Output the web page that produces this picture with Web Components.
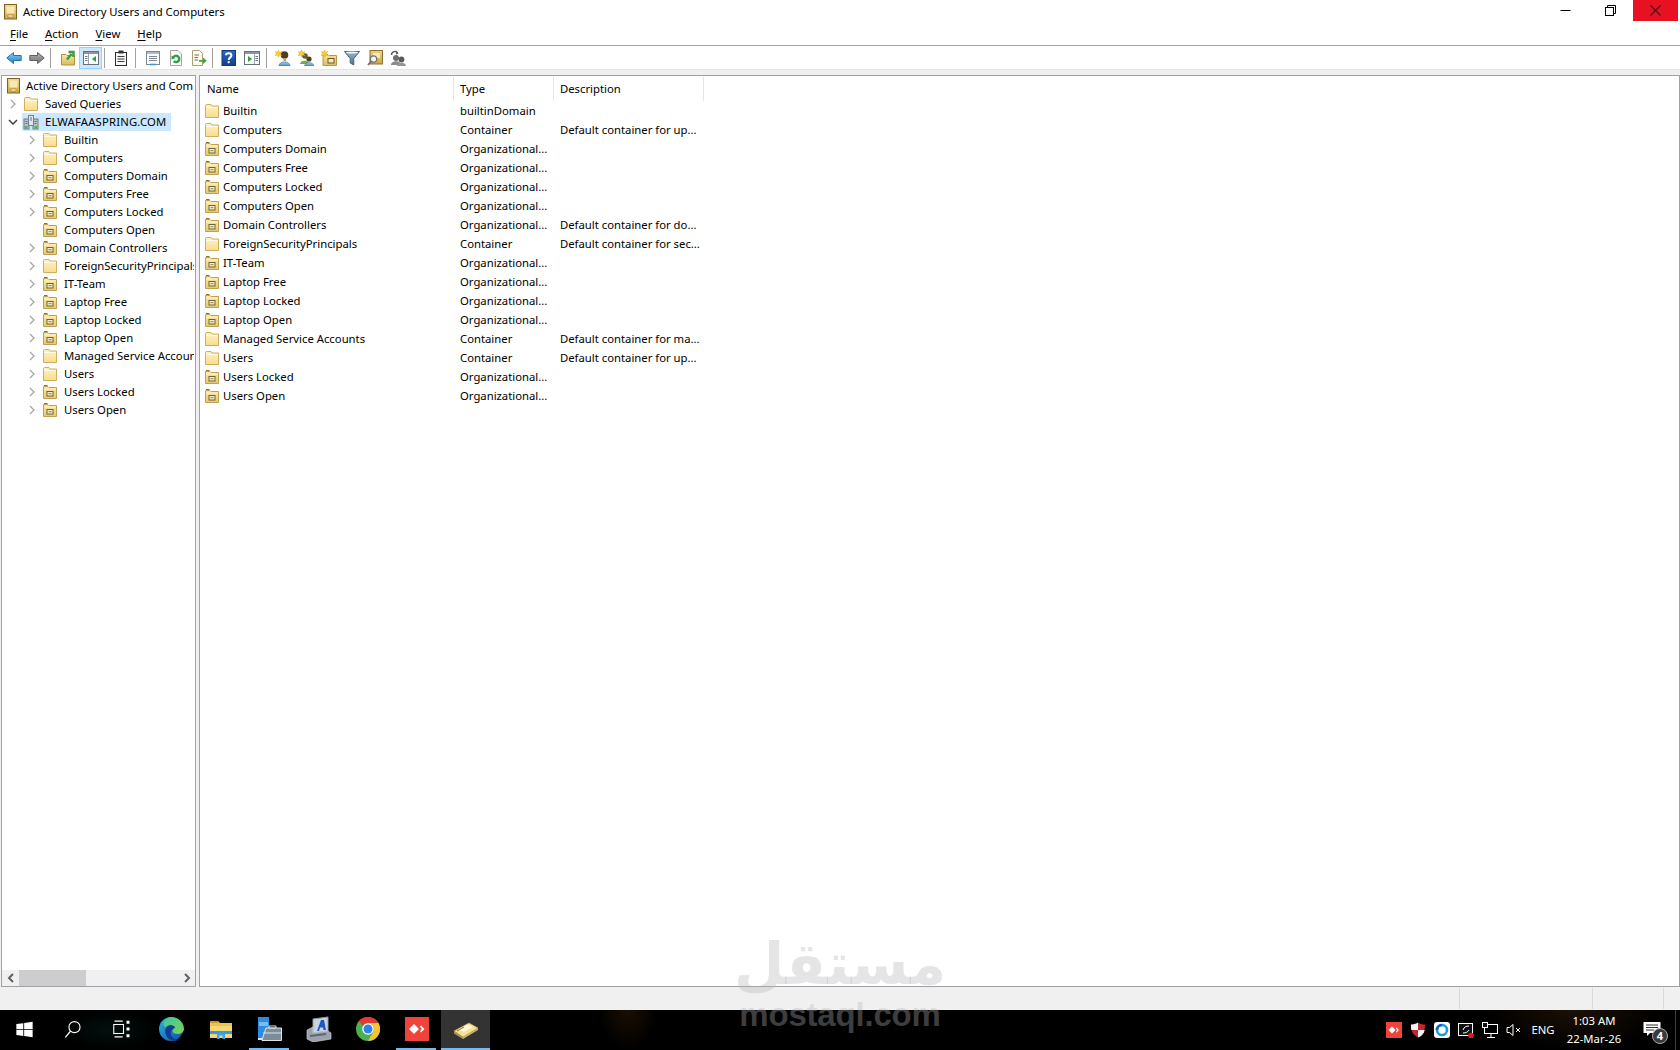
<!doctype html>
<html lang="en"><head><meta charset="utf-8"><title>Active Directory Users and Computers</title>
<style>
html,body{margin:0;height:1050px;width:1680px;overflow:hidden;background:#fff;font:11.3px/16px "Noto Sans",sans-serif;color:#000}
</style></head>
<body>
<ad-desktop>
<win-titlebar>Active Directory Users and Computers</win-titlebar>
<win-menubar><menu-item key="F" rest="ile"></menu-item><menu-item key="A" rest="ction"></menu-item><menu-item key="V" rest="iew"></menu-item><menu-item key="H" rest="elp"></menu-item></win-menubar>
<win-toolbar>
<tool-btn icon="back"></tool-btn><tool-btn icon="fwd"></tool-btn><tool-sep l="2" r="5"></tool-sep>
<tool-btn icon="up"></tool-btn><tool-btn icon="tree" active></tool-btn><tool-sep l="2" r="4"></tool-sep>
<tool-btn icon="clip"></tool-btn><tool-sep l="3" r="5"></tool-sep>
<tool-btn icon="props"></tool-btn><tool-btn icon="refresh"></tool-btn><tool-btn icon="export"></tool-btn><tool-sep l="2" r="4"></tool-sep>
<tool-btn icon="help"></tool-btn><tool-btn icon="action"></tool-btn><tool-sep l="3" r="4"></tool-sep>
<tool-btn icon="nuser"></tool-btn><tool-btn icon="ngroup"></tool-btn><tool-btn icon="nou"></tool-btn><tool-btn icon="filter"></tool-btn><tool-btn icon="find"></tool-btn><tool-btn icon="deleg"></tool-btn>
</win-toolbar>
<mmc-panes>
<tree-pane slot="left">
<tree-row icon="root" level="0">Active Directory Users and Computers</tree-row>
<tree-row icon="folder" level="1" arrow="right">Saved Queries</tree-row>
<tree-row icon="domain" level="1" arrow="down" selected>ELWAFAASPRING.COM</tree-row>
<tree-row icon="folder" level="2" arrow="right">Builtin</tree-row>
<tree-row icon="folder" level="2" arrow="right">Computers</tree-row>
<tree-row icon="ou" level="2" arrow="right">Computers Domain</tree-row>
<tree-row icon="ou" level="2" arrow="right">Computers Free</tree-row>
<tree-row icon="ou" level="2" arrow="right">Computers Locked</tree-row>
<tree-row icon="ou" level="2">Computers Open</tree-row>
<tree-row icon="ou" level="2" arrow="right">Domain Controllers</tree-row>
<tree-row icon="folder" level="2" arrow="right">ForeignSecurityPrincipals</tree-row>
<tree-row icon="ou" level="2" arrow="right">IT-Team</tree-row>
<tree-row icon="ou" level="2" arrow="right">Laptop Free</tree-row>
<tree-row icon="ou" level="2" arrow="right">Laptop Locked</tree-row>
<tree-row icon="ou" level="2" arrow="right">Laptop Open</tree-row>
<tree-row icon="folder" level="2" arrow="right">Managed Service Accounts</tree-row>
<tree-row icon="folder" level="2" arrow="right">Users</tree-row>
<tree-row icon="ou" level="2" arrow="right">Users Locked</tree-row>
<tree-row icon="ou" level="2" arrow="right">Users Open</tree-row>
</tree-pane>
<list-pane slot="right">
<list-row icon="folder" type="builtinDomain">Builtin</list-row>
<list-row icon="folder" type="Container" desc="Default container for up...">Computers</list-row>
<list-row icon="ou" type="Organizational...">Computers Domain</list-row>
<list-row icon="ou" type="Organizational...">Computers Free</list-row>
<list-row icon="ou" type="Organizational...">Computers Locked</list-row>
<list-row icon="ou" type="Organizational...">Computers Open</list-row>
<list-row icon="ou" type="Organizational..." desc="Default container for do...">Domain Controllers</list-row>
<list-row icon="folder" type="Container" desc="Default container for sec...">ForeignSecurityPrincipals</list-row>
<list-row icon="ou" type="Organizational...">IT-Team</list-row>
<list-row icon="ou" type="Organizational...">Laptop Free</list-row>
<list-row icon="ou" type="Organizational...">Laptop Locked</list-row>
<list-row icon="ou" type="Organizational...">Laptop Open</list-row>
<list-row icon="folder" type="Container" desc="Default container for ma...">Managed Service Accounts</list-row>
<list-row icon="folder" type="Container" desc="Default container for up...">Users</list-row>
<list-row icon="ou" type="Organizational...">Users Locked</list-row>
<list-row icon="ou" type="Organizational...">Users Open</list-row>
</list-pane>
</mmc-panes>
<win-status></win-status>
<task-bar>
<task-btn slot="left" icon="tbwin" size="17" w="48"></task-btn><task-btn slot="left" icon="tbsearch" size="19" w="48"></task-btn><task-btn slot="left" icon="tbview" size="18" w="51"></task-btn>
<task-btn slot="left" icon="tbedge"></task-btn><task-btn slot="left" icon="tbfolder"></task-btn><task-btn slot="left" icon="tbserver" state="run"></task-btn><task-btn slot="left" icon="tbprint"></task-btn><task-btn slot="left" icon="tbchrome"></task-btn><task-btn slot="left" icon="tbany" state="run"></task-btn><task-btn slot="left" icon="tbbook" state="active"></task-btn>
<tray-icon slot="tray" icon="trany"></tray-icon><tray-icon slot="tray" icon="trshield"></tray-icon><tray-icon slot="tray" icon="trcircle"></tray-icon><tray-icon slot="tray" icon="trremote"></tray-icon><tray-icon slot="tray" icon="trnet"></tray-icon><tray-icon slot="tray" icon="trsound"></tray-icon>
<tray-clock slot="tray"></tray-clock>
</task-bar>
<water-mark></water-mark>
</ad-desktop>
<script>
const G=(id,a,b)=>`<linearGradient id="${id}" x1="0" y1="0" x2="0" y2="1"><stop offset="0" stop-color="${a}"/><stop offset="1" stop-color="${b}"/></linearGradient>`;
const star=`<path d="M3.5 0 4.4 2.3 6.8 1.5 5.5 3.6 6.8 5.7 4.4 5 3.5 7.2 2.6 5 .2 5.7 1.5 3.6 .2 1.5 2.6 2.3Z" fill="#f7d22e" stroke="#c89a14" stroke-width=".4"/>`;
const ouBody=`<path d="M1.5 2.5H6L7 3.5H14.5V14.5H1.5Z" fill="url(#o)" stroke="#c2a050"/><path d="M2 1.500H5.500" stroke="#8a7232"/><path d="M2 5H14" stroke="#fdf3c8"/><rect x="5" y="7.500" width="6" height="4.500" fill="#f8efc8" stroke="#6f6434"/><path d="M6.500 9.700H9.500" stroke="#6f6434" stroke-width=".8"/>`;
const I={
back:[16,`<defs>${G('a','#86d4f7','#1d7ecb')}</defs><path d="M.8 8 7.5 2.5V5.5H15.2V10.5H7.5V13.5Z" fill="url(#a)" stroke="#2173b5"/>`],
fwd:[16,`<defs>${G('a','#b5b5b5','#6f6f6f')}</defs><path d="M15.2 8 8.5 2.5V5.5H.8V10.5H8.5V13.5Z" fill="url(#a)" stroke="#5f5f5f"/>`],
up:[16,`<defs>${G('o','#f8e6a6','#dcb961')}</defs><path d="M1.5 4.5H6L7 5.5H14.5V15H1.5Z" fill="url(#o)" stroke="#b2913f"/><path d="M7 9.500 11.500 4M8.500 2H13.500V7" fill="none" stroke="#3f9a3a" stroke-width="2.400"/>`],
tree:[16,`<rect x=".5" y="1.5" width="15" height="13" fill="#fbfbfb" stroke="#67717d"/><rect x="1" y="2" width="14" height="2" fill="#8b96a2"/><path d="M5.5 4V14" stroke="#9aa4ad"/><path d="M2 6.5H4.500M2 8.500H4.500M2 10.500H4.500" stroke="#6a7681"/><path d="M13 6 9 9 13 12Z" fill="#22a13a"/>`],
clip:[16,`<rect x="2.500" y="2.500" width="11" height="13" fill="#f5f5f5" stroke="#2e2e2e"/><rect x="5.500" y=".5" width="5" height="3" fill="#333"/><path d="M4.500 6.500H11.500M4.500 9H11.500M4.500 11.500H11.500" stroke="#3a3a3a"/>`],
props:[16,`<rect x="1.500" y="1.500" width="13" height="13" fill="#fcfcfc" stroke="#7d8790"/><rect x="2" y="2" width="12" height="2" fill="#b2bac2"/><path d="M4 6.500H12M4 8.500H12M4 10.500H12" stroke="#7c8791"/><path d="M5 14.500H11" stroke="#3f8fd8" stroke-width="1.500"/>`],
refresh:[16,`<path d="M2.500 .5H10L13.500 4V15.500H2.500Z" fill="#fcfcfc" stroke="#a5a5a5"/><path d="M5 8A3.200 3.200 0 1 1 5.800 11.200" fill="none" stroke="#2f9e45" stroke-width="2.400"/><path d="M3.500 5.500 7.500 8 3.500 9.500Z" fill="#2f9e45"/>`],
export:[16,`<path d="M1.500 .5H8.500L11.500 3.500V15.500H1.500Z" fill="#fffbe8" stroke="#ac9f7b"/><path d="M3.500 5H8M3.500 7.500H7M3.500 10H7" stroke="#6d6d6d"/><path d="M8 10H12V7.500L15.800 10.800 12 14V11.800H8Z" fill="#3aa948"/>`],
help:[16,`<defs>${G('h','#2a6bc4','#123d8c')}</defs><rect x="1" y=".5" width="13.500" height="15" fill="url(#h)" stroke="#16367d"/><path d="M5 5.200C5 2.800 10.400 2.600 10.400 5.400 10.400 7.400 7.700 7.400 7.700 10" fill="none" stroke="#fff" stroke-width="2"/><rect x="6.700" y="11.200" width="2" height="2" fill="#fff"/>`],
action:[16,`<rect x=".5" y="1.500" width="15" height="13" fill="#fbfbfb" stroke="#67717d"/><rect x="1" y="2" width="14" height="2" fill="#8b96a2"/><path d="M10.500 4V14" stroke="#9aa4ad"/><path d="M11.500 6.500H14M11.500 8.500H14M11.500 10.500H14" stroke="#6a7681"/><path d="M4 6 8 9 4 12Z" fill="#22a13a"/>`],
nuser:[16,`<defs>${G('u','#a5d0ef','#4d8fc6')}</defs><circle cx="9.500" cy="5" r="3.800" fill="#4e3d22"/><path d="M8.500 8H11V11H8.500Z" fill="#c49a68"/><path d="M4 16C4 10.500 15 10.500 15 16Z" fill="url(#u)" stroke="#3d76a8" stroke-width=".7"/>${star}`],
ngroup:[16,`<defs>${G('u','#a5d0ef','#4d8fc6')}</defs><circle cx="7" cy="6" r="2.800" fill="#6a5a30"/><path d="M2 14C2 9.500 11 9.500 11 14Z" fill="#7da64e"/><circle cx="11" cy="9" r="2.600" fill="#4e3d22"/><path d="M6.500 16C6.500 11.500 15.800 11.500 15.800 16Z" fill="url(#u)" stroke="#3d76a8" stroke-width=".6"/>${star}`],
nou:[16,`<defs>${G('o','#f7e4a0','#dfbd66')}</defs><path d="M2 4.500H7L8 5.500H15.500V15.500H2Z" fill="url(#o)" stroke="#b89840"/><rect x="7" y="8.500" width="6" height="4.500" fill="#f8e9b4" stroke="#6f5a22"/>${star}`],
filter:[16,`<defs>${G('f','#9ab8cf','#4e6f8a')}</defs><path d="M.5 1.500H15.500L9.800 8.500V15L6.200 13V8.500Z" fill="url(#f)" stroke="#4b6478"/><ellipse cx="8" cy="2.500" rx="6" ry="1" fill="#edf4f9"/>`],
find:[16,`<defs>${G('o','#ecd084','#cda745')}</defs><rect x="3" y=".5" width="12.500" height="13.500" fill="url(#o)" stroke="#8f7430"/><rect x="6" y="3" width="7" height="5" fill="#f7eac0"/><circle cx="6.500" cy="9" r="3.200" fill="#eef5fa" stroke="#717171" stroke-width="1.200"/><path d="M4 11.500 1 15" stroke="#7e6c4a" stroke-width="1.800"/>`],
deleg:[16,`<path d="M1.500 5C1.500 1 6.500 .5 7.500 3" fill="none" stroke="#555" stroke-width="1.400"/><path d="M6.500 1.500 8.500 3.500 6 4.500Z" fill="#555"/><circle cx="6" cy="8" r="3" fill="#6d6d6d"/><path d="M1 15C1 10 11 10 11 15Z" fill="#8a8a8a"/><circle cx="11.500" cy="9.500" r="2.900" fill="#5a5a5a"/><path d="M7 16C7 11.500 16 11.500 16 16Z" fill="#969696"/>`],
folder:[16,`<defs>${G('f','#fff2c4','#f7dc8c')}</defs><path d="M1.500 2.500C1.500 1.800 2 1.500 2.500 1.500H7L8 3H14.500V14.500H1.500Z" fill="url(#f)" stroke="#d2ae5c"/><path d="M2 4.500H14" stroke="#fffbe6"/>`],
ou:[16,`<defs>${G('o','#f9e8aa','#e6c870')}</defs>${ouBody}`],
root:[16,`<defs>${G('r','#f1d687','#d0a648')}</defs><rect x="1.500" y=".5" width="12" height="14.500" fill="url(#r)" stroke="#7c6426"/><rect x="3.500" y="2.500" width="8" height="7" fill="#f8e8b2"/><rect x="5" y="11" width="5" height="2" fill="#fbf2cf" stroke="#8f7430" stroke-width=".5"/>`],
domain:[16,`<rect x="1" y="5" width="5" height="10" fill="#b9c3cc" stroke="#6f7b86"/><rect x="10" y="5" width="5" height="10" fill="#b9c3cc" stroke="#6f7b86"/><rect x="5.500" y="1.500" width="5" height="10" fill="#dfe5ea" stroke="#75818c"/><path d="M2.500 7.500H4.500M2.500 9.500H4.500M11.500 7.500H13.500M11.500 9.500H13.500M7 4H9M7 6H9" stroke="#5f7080"/><rect x="2" y="12" width="2.500" height="2.500" fill="#3fbb3f"/><rect x="11.500" y="12" width="2.500" height="2.500" fill="#3fbb3f"/>`],
tbwin:[24,`<path d="M.5 4.300 10.300 3V11.500H.5ZM11.500 2.800 23.500 1V11.500H11.500ZM.5 12.700H10.300V21L.5 19.700ZM11.500 12.700H23.500V23L11.500 21.200Z" fill="#fff"/>`],
tbsearch:[24,`<circle cx="14.500" cy="9" r="7" fill="none" stroke="#fff" stroke-width="1.400"/><path d="M9.500 14 3 22" stroke="#fff" stroke-width="1.700"/>`],
tbview:[24,`<g fill="none" stroke="#fff" stroke-width="1.400"><rect x="1" y="6" width="13" height="12"/><path d="M2 1.500H13M2 22.500H13"/></g><path d="M18 1H22V5H18ZM18 10H22V14H18ZM18 19H22V23H18Z" fill="#fff"/>`],
tbedge:[26,`<defs><linearGradient id="e" x1="0" y1="0" x2="1" y2="1"><stop offset="0" stop-color="#2fb2e0"/><stop offset="1" stop-color="#0a4fa8"/></linearGradient><linearGradient id="g" x1="0" y1="0" x2="1" y2="1"><stop offset="0" stop-color="#3cc8a8"/><stop offset="1" stop-color="#7fd04e"/></linearGradient></defs><circle cx="12" cy="13" r="12" fill="url(#e)"/><path d="M12 1C20 1 25 7 25 13 25 16 22 18 18 18 14 18 13 15 14 13 10 11 5 13 4 7 6 3 9 1 12 1Z" fill="url(#g)"/><path d="M12 9C7 9 5 14 7 19 9 24 15 26 20 24 15 24 11 20 12 16 13 12 17 12 16 11 15 10 13 9 12 9Z" fill="#0f3f92"/>`],
tbfolder:[24,`<path d="M1 4H9L11 6H23V21H1Z" fill="#f0c050"/><path d="M1 4H9V6H1Z" fill="#c9952e"/><rect x="1" y="9" width="22" height="12" fill="#f7d774"/><rect x="1" y="14" width="22" height="3" fill="#2f9be6"/><path d="M8 22V16H16V22H13.500V18.500H10.500V22Z" fill="#3aa5ee"/>`],
tbserver:[26,`<rect x="1" y="1" width="11" height="21" fill="#2d8be0"/><path d="M2 7H11M2 9H11" stroke="#cfe8ff"/><rect x="1" y="22" width="11" height="2" fill="#cfe8ff"/><path d="M9 12H24.500V24.500H5V24Z" fill="#7e8b99" stroke="#dbe5ee"/><path d="M12 10H19V12H12Z" fill="none" stroke="#dbe5ee"/><path d="M6 17H24" stroke="#dbe5ee"/>`],
tbprint:[26,`<path d="M7 3 22 1V15L7 17Z" fill="#c8d4e0" stroke="#8f9caa"/><path d="M11 15 15 4H18L20 14H17.500L17 11.500H14L13 15Z" fill="#1f56c4"/><path d="M1 14 7 11V17L22 15 25 17V23L7 26 1 23Z" fill="#9aa3ac" stroke="#d6dbe0" stroke-width=".6"/><path d="M4 20 20 18" stroke="#5d6670" stroke-width="2"/>`],
tbchrome:[24,`<circle cx="12" cy="12" r="12" fill="#4caf50"/><path d="M12 0A12 12 0 0 1 22.400 6H12A6 6 0 0 0 6.800 9L3 3.700A12 12 0 0 1 12 0Z" fill="#e33b2e"/><path d="M22.400 6A12 12 0 0 1 12 24L17.200 15A6 6 0 0 0 12 6Z" fill="#f7c32e"/><circle cx="12" cy="12" r="5.800" fill="#fff"/><circle cx="12" cy="12" r="4.500" fill="#2f80ed"/>`],
tbany:[24,`<rect width="24" height="24" fill="#ef443b"/><path d="M9 7 14 12 9 17 4 12Z" fill="#fff"/><path d="M16 8.500 19.500 12 16 15.500 14.800 14.300 17 12 14.800 9.700Z" fill="#fff"/>`],
tbbook:[26,`<path d="M1 15 16 7 25 12 10 21Z" fill="#f3e29c" stroke="#c4a44e" stroke-width=".6"/><path d="M1 15 10 21V23L1 17.500Z" fill="#b8984a"/><path d="M10 21 25 12V14L10 23Z" fill="#d3b75f"/><path d="M5 13.500 14 8.500 20 11 11 16Z" fill="#fff6cf"/><path d="M4 15 11 11" stroke="#8a7232"/>`],
trany:[16,`<rect width="16" height="16" fill="#ef443b"/><path d="M6 4.500 9.500 8 6 11.500 2.500 8Z" fill="#fff"/><path d="M10.500 5.500 13 8 10.500 10.500 9.700 9.700 11.300 8 9.700 6.300Z" fill="#fff"/>`],
trshield:[16,`<path d="M8 .5C10 2 12.500 2.500 15 2.500 15 9 13 13 8 15.500 3 13 1 9 1 2.500 3.500 2.500 6 2 8 .5Z" fill="#c9252f"/><path d="M8 .5V8H1.300C1.100 6.500 1 4.500 1 2.500 3.500 2.500 6 2 8 .5ZM8 8H14.700C14 11.500 12 14 8 15.500Z" fill="#f5f5f5"/>`],
trcircle:[16,`<rect width="16" height="16" rx="3" fill="#fff"/><circle cx="8" cy="8" r="5" fill="none" stroke="#1f9be0" stroke-width="2.600"/><path d="M3 8A5 5 0 0 1 8 3" fill="none" stroke="#0b5fc4" stroke-width="2.600"/>`],
trremote:[16,`<rect x=".5" y="1.500" width="14" height="12" fill="#111" stroke="#fff"/><path d="M5 8C6 5 8 4 11 4M11 8C10 10 8 11 5 11" fill="none" stroke="#fff"/><circle cx="13" cy="13.500" r="2.800" fill="#e21b1b"/>`],
trnet:[16,`<rect x="2.500" y="2.500" width="13" height="9" fill="none" stroke="#fff"/><rect x=".5" y=".5" width="5" height="5" fill="#111" stroke="#fff"/><path d="M9 12V15M5 15.500H13" stroke="#fff"/>`],
trsound:[16,`<path d="M1 5.500H3.500L7 2.500V13.500L3.500 10.500H1Z" fill="none" stroke="#fff"/><path d="M10 6 14 10M14 6 10 10" stroke="#fff"/>`],
trnote:[20,`<path d="M1.500 2H18.500V13H8L5 16V13H1.500Z" fill="#fff"/><path d="M4 5H16M4 7.500H16M4 10H12" stroke="#333"/>`]
};
function root(el,css,html){if(el.shadowRoot)return;const s=el.attachShadow({mode:'open'});s.innerHTML=`<style>${css}</style>${html}`;}
const def=(n,c)=>customElements.define(n,c);
def('ad-icon',class extends HTMLElement{connectedCallback(){const [vb,b]=I[this.getAttribute('name')];const z=this.getAttribute('size')||vb;root(this,`:host{display:block;width:${z}px;height:${z}px;flex:none}svg{display:block}`,`<svg xmlns="http://www.w3.org/2000/svg" width="${z}" height="${z}" viewBox="0 0 ${vb} ${vb}" shape-rendering="geometricPrecision">${b}</svg>`);}});
def('ad-desktop',class extends HTMLElement{connectedCallback(){root(this,`:host{display:flex;flex-direction:column;width:1680px;height:1050px;position:relative;overflow:hidden}`,`<slot></slot>`);}});
def('win-titlebar',class extends HTMLElement{connectedCallback(){root(this,`:host{display:flex;height:24px;flex:none;align-items:flex-start;background:#fff}
.i{margin:4px 0 0 3px}.t{flex:1;margin:4px 0 0 4px;line-height:16px;white-space:nowrap}
.b{width:45px;height:21px;display:flex;align-items:center;justify-content:center}
.x{background:#e81123;margin-right:2px}`,`<ad-icon class="i" name="root"></ad-icon><div class="t"><slot></slot></div>
<div class="b"><svg width="11" height="11" viewBox="0 0 11 11"><path d="M.5 5.500H10.500" stroke="#000"/></svg></div>
<div class="b"><svg width="11" height="11" viewBox="0 0 11 11" fill="none" stroke="#000"><rect x=".5" y="2.500" width="8" height="8"/><path d="M2.500 2.500V.5H10.500V8.500H8.500"/></svg></div>
<div class="b x"><svg width="11" height="11" viewBox="0 0 11 11"><path d="M.5 .5 10.500 10.500M10.500 .5 .5 10.500" stroke="#3a1a1a" stroke-width="1.200"/></svg></div>`);}});
def('win-menubar',class extends HTMLElement{connectedCallback(){root(this,`:host{display:flex;flex:none;height:21px;gap:17px;padding:0 0 2px 10px;box-sizing:content-box;height:19px;align-items:center;background:#fff;border-bottom:1px solid #a0a0a0}`,`<slot></slot>`);}});
def('menu-item',class extends HTMLElement{connectedCallback(){root(this,`:host{display:block;line-height:16px}u{text-underline-offset:2px}`,`<u>${this.getAttribute('key')}</u>${this.getAttribute('rest')}`);}});
def('win-toolbar',class extends HTMLElement{connectedCallback(){root(this,`:host{display:flex;flex:none;height:23px;padding-left:2px;align-items:center;background:#fff;border-bottom:1px solid #e6e6e6}`,`<slot></slot>`);}});
def('tool-btn',class extends HTMLElement{connectedCallback(){root(this,`:host{display:flex;box-sizing:border-box;width:23px;height:22px;align-items:center;justify-content:center;border:1px solid transparent}:host([active]){background:#cce8ff;border-color:#99d1ff}`,`<ad-icon name="${this.getAttribute('icon')}"></ad-icon>`);}});
def('tool-sep',class extends HTMLElement{connectedCallback(){root(this,`:host{display:block;width:1px;height:20px;background:#a0a0a0;margin:0 ${this.getAttribute('r')}px 0 ${this.getAttribute('l')}px}`,``);}});
def('mmc-panes',class extends HTMLElement{connectedCallback(){root(this,`:host{display:flex;flex:1;min-height:0;gap:3px;padding:5px 0 0 1px;background:#f0f0f0}`,`<slot name="left"></slot><slot name="right"></slot>`);}});
def('tree-pane',class extends HTMLElement{connectedCallback(){root(this,`:host{display:flex;flex-direction:column;box-sizing:border-box;width:195px;flex:none;border:1px solid #a0a0a8;background:#fff;overflow:hidden}
.s{flex:1;min-height:0;padding-top:1px;overflow:hidden}.sb{flex:none;height:16px;margin-bottom:0;display:flex;align-items:center;background:#f0f0f0}
.a{width:17px;height:16px;display:flex;align-items:center;justify-content:center}.th{width:67px;height:16px;background:#cdcdcd}.sp{flex:1}`,
`<div class="s"><slot></slot></div><div class="sb"><div class="a"><svg width="8" height="10" viewBox="0 0 8 10"><path d="M6 1 2 5 6 9" fill="none" stroke="#606060" stroke-width="2"/></svg></div><div class="th"></div><div class="sp"></div><div class="a"><svg width="8" height="10" viewBox="0 0 8 10"><path d="M2 1 6 5 2 9" fill="none" stroke="#606060" stroke-width="2"/></svg></div></div>`);}});
def('tree-row',class extends HTMLElement{connectedCallback(){const l=+this.getAttribute('level'),a=this.getAttribute('arrow');
const arrow=a==='right'?`<svg width="10" height="10" viewBox="0 0 10 10"><path d="M3 1 7 5 3 9" fill="none" stroke="#a6a6a6" stroke-width="1.300"/></svg>`:a==='down'?`<svg width="10" height="10" viewBox="0 0 10 10"><path d="M1 3 5 7 9 3" fill="none" stroke="#404040" stroke-width="1.500"/></svg>`:'';
const ind=l===0?3:l===1?4:23;
root(this,`:host{display:flex;height:18px;align-items:center;white-space:nowrap;overflow:hidden;margin-right:1px}
:host([selected]){letter-spacing:.18px}
.in{flex:none;width:${ind}px}.ex{flex:none;width:${l===0?0:16}px;height:18px;display:flex;align-items:center;justify-content:flex-start;padding-left:${l===0?0:2}px;box-sizing:border-box}
.w{display:flex;align-items:center;height:18px;padding:0 4px 0 1px;gap:${l===0?4:6}px}:host([selected]) .w{background:#cce8ff}`,
`<div class="in"></div><div class="ex">${l===0?'':arrow}</div><div class="w"><ad-icon name="${this.getAttribute('icon')}"></ad-icon><slot></slot></div>`);}});
def('list-pane',class extends HTMLElement{connectedCallback(){root(this,`:host{display:block;flex:1;min-width:0;box-sizing:border-box;border:1px solid #a0a0a8;background:#fff;padding-top:1px;overflow:hidden}
.h{display:grid;grid-template-columns:254px 100px 150px;height:24px}
.h div{display:flex;align-items:center;box-sizing:border-box;padding-left:6px;border-right:1px solid #e5e5e5;padding-bottom:0}
.h div:first-child{padding-left:7px}`,`<div class="h"><div>Name</div><div>Type</div><div>Description</div></div><slot></slot>`);}});
def('list-row',class extends HTMLElement{connectedCallback(){root(this,`:host{display:grid;grid-template-columns:254px 100px 150px;height:19px;align-items:center;white-space:nowrap}
.n{display:flex;align-items:center;gap:3px;padding-left:4px}.c{padding-left:6px}`,`<div class="n"><ad-icon name="${this.getAttribute('icon')}"></ad-icon><slot></slot></div><div class="c">${this.getAttribute('type')}</div><div class="c">${this.getAttribute('desc')||''}</div>`);}});
def('win-status',class extends HTMLElement{connectedCallback(){root(this,`:host{display:flex;flex:none;height:23px;background:#f0f0f0;box-sizing:border-box;padding:1px 0}
div{border-right:1px solid #d9d9d9;box-sizing:border-box}.a{width:1460px}.b{width:133px}.c{width:71px}`,`<div class="a"></div><div class="b"></div><div class="c"></div>`);}});
def('task-bar',class extends HTMLElement{connectedCallback(){root(this,`:host{display:flex;flex:none;height:40px;color:#fff;justify-content:space-between;background:radial-gradient(ellipse 90px 40px at 1575px 0,#1c1006,transparent),radial-gradient(ellipse 30px 40px at 628px 0,#1a0f03,transparent),radial-gradient(ellipse 50px 20px at 110px 20px,#03100f,transparent),#000}
.l,.r{display:flex}`,`<div class="l"><slot name="left"></slot></div><div class="r"><slot name="tray"></slot></div>`);}});
def('task-btn',class extends HTMLElement{connectedCallback(){const w=this.getAttribute('w')||49,st=this.getAttribute('state'),z=this.getAttribute('size');root(this,`:host{display:flex;width:${w}px;height:40px;align-items:center;justify-content:center;box-sizing:border-box;position:relative;padding-bottom:2px}
:host([state=active]){background:#333}
:host([state=run])::after,:host([state=active])::after{content:"";position:absolute;bottom:0;height:2px;background:#76b9ed;left:${st==='run'?4:0}px;right:${st==='run'?5:0}px}`,`<ad-icon name="${this.getAttribute('icon')}"${z?` size="${z}"`:''}></ad-icon>`);}});
def('tray-icon',class extends HTMLElement{connectedCallback(){root(this,`:host{display:flex;width:24px;height:40px;align-items:center;justify-content:center}`,`<ad-icon name="${this.getAttribute('icon')}"></ad-icon>`);}});
def('tray-clock',class extends HTMLElement{connectedCallback(){root(this,`:host{display:flex;height:40px;align-items:center;color:#fff}
.e{width:34px;text-align:center}.c{width:68px;text-align:center;line-height:18px;padding-bottom:1px}
.n{width:47px;height:40px;position:relative;display:flex;align-items:center;justify-content:center}
.bd{position:absolute;left:24px;top:18px;width:16px;height:16px;border-radius:50%;background:#3a3a3a;border:1px solid #aaa;box-sizing:border-box;font-size:11px;font-weight:700;line-height:14px;text-align:center}
.ln{width:1px;height:40px;background:#3c3c3c}.end{width:4px}`,`<div class="e">ENG</div><div class="c"><div>1:03 AM</div><div>22-Mar-26</div></div><div class="n"><ad-icon name="trnote"></ad-icon><div class="bd">4</div></div><div class="ln"></div><div class="end"></div>`);}});
def('water-mark',class extends HTMLElement{connectedCallback(){root(this,`:host{position:absolute;left:730px;top:926px;width:220px;height:120px;pointer-events:none;color:rgba(181,181,181,.35);display:flex;flex-direction:column;align-items:center;overflow:visible;direction:ltr}
.a{font:700 58px/76px "DejaVu Sans",sans-serif;height:72px;white-space:nowrap}.b{font:700 33px/34px "Liberation Sans",sans-serif;white-space:nowrap;letter-spacing:-.2px}`,`<div class="a" dir="rtl" lang="ar">مستقل</div><div class="b">mostaql.com</div>`);}});
</script>
</body></html>
